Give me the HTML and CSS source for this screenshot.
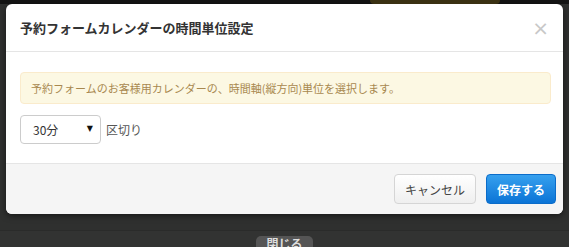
FILE: index.html
```html
<!doctype html>
<html>
  <head>
    <meta charset="utf-8" />
    <link rel="stylesheet" href="styles.css">
  </head>
  <body>
    <div class="topbar">
      <div class="topbar-btn"></div>
    </div>

    <div class="modal">
      <div class="modal-header">
        <h4 class="modal-title">予約フォームカレンダーの時間単位設定</h4>
        <button class="close" aria-label="閉じる">&times;</button>
      </div>

      <div class="modal-body">
        <div class="alert">予約フォームのお客様用カレンダーの、時間軸(縦方向)単位を選択します。</div>
        <div class="form-row">
          <div class="select-wrap">
            <select class="select">
              <option>15分</option>
              <option selected>30分</option>
              <option>60分</option>
            </select>
            <span class="select-arrow">&#9660;</span>
          </div>
          <span class="form-suffix">区切り</span>
        </div>
      </div>

      <div class="modal-footer">
        <button class="btn btn-default">キャンセル</button>
        <button class="btn btn-primary">保存する</button>
      </div>
    </div>

    <div class="page-bottom">
      <div class="page-btn">閉じる</div>
    </div>
  </body>
</html>
```

FILE: styles.css
```css
* {
  box-sizing: border-box;
}

body {
  width: 569px;
  height: 247px;
  margin: 0;
  overflow: hidden;
  background: #2f302f;
  font-family: "Noto Sans CJK JP", "Noto Sans", sans-serif;
  font-size: 12px;
  color: #333;
}

/* Page behind the backdrop */
.topbar {
  height: 4px;
  background: #141414;
  display: flex;
}

.topbar-btn {
  width: 130px;
  margin-left: 370px;
  background: #3a3112;
  border-radius: 0 0 6px 6px;
}

/* Modal */
.modal {
  width: 557px;
  height: 210px;
  margin-left: 6px;
  background: #fff;
  border-radius: 6px;
  box-shadow: 0 2px 6px rgba(0, 0, 0, 0.5);
  display: flex;
  flex-direction: column;
}

.modal-header {
  height: 48px;
  padding: 0 14px;
  border-bottom: 1px solid #e5e5e5;
  display: flex;
  align-items: center;
  justify-content: space-between;
}

.modal-title {
  margin: 0;
  font-size: 13px;
  font-weight: 700;
  color: #333;
  line-height: 1;
}

.close {
  padding: 0;
  border: 0;
  background: transparent;
  font-family: "DejaVu Sans", sans-serif;
  font-size: 20px;
  line-height: 1;
  color: #c8c8c8;
  cursor: pointer;
}

.modal-body {
  flex: 1;
  padding: 20px 12px 0 14px;
}

.alert {
  height: 32px;
  padding: 0 10px;
  background: #fcf8e3;
  border: 1px solid #faebcc;
  border-radius: 4px;
  color: #a8884f;
  font-size: 11px;
  display: flex;
  align-items: center;
}

.form-row {
  margin-top: 11px;
  display: flex;
  align-items: center;
  gap: 5px;
}

.select-wrap {
  position: relative;
}

.select {
  width: 81px;
  height: 29px;
  padding: 0 0 0 12px;
  border: 1px solid #ccc;
  border-radius: 4px;
  background: #fff;
  color: #333;
  font-family: inherit;
  font-size: 12px;
  appearance: none;
  -webkit-appearance: none;
}

.select-arrow {
  position: absolute;
  right: 8px;
  top: 9px;
  font-family: "DejaVu Sans", sans-serif;
  font-size: 8px;
  color: #111;
  pointer-events: none;
}

.form-suffix {
  color: #555;
}

.modal-footer {
  height: 51px;
  padding: 0 7px 0 0;
  background: #f5f5f5;
  border-top: 1px solid #e5e5e5;
  border-radius: 0 0 6px 6px;
  display: flex;
  align-items: flex-start;
  justify-content: flex-end;
  gap: 10px;
}

.btn {
  height: 30px;
  margin-top: 10px;
  padding: 0;
  border-radius: 4px;
  font-family: inherit;
  font-size: 12px;
  white-space: nowrap;
  cursor: pointer;
}

.btn-default {
  width: 82px;
  border: 1px solid #d5d5d5;
  background: linear-gradient(#fff, #efefef);
  color: #444;
}

.btn-primary {
  width: 70px;
  border: 1px solid #0b6cc9;
  background: linear-gradient(#36a0ee, #0b74d6);
  color: #fff;
  font-weight: 700;
}

/* Bottom of the page */
.page-bottom {
  height: 17px;
  margin-top: 16px;
  border-top: 1px solid #2a2b2a;
  background: #323332;
  display: flex;
  justify-content: center;
  overflow: hidden;
}

.page-btn {
  width: 57px;
  height: 20px;
  margin-top: 5px;
  padding-top: 2px;
  background: #555;
  border-radius: 5px 5px 0 0;
  color: #ddd;
  font-size: 12px;
  font-weight: 700;
  line-height: 1;
  text-align: center;
}
```
